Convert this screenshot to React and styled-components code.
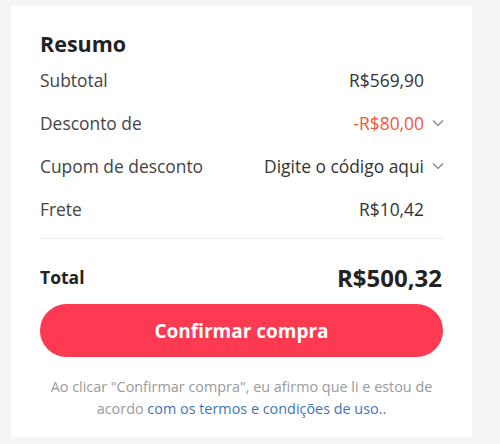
import React from "react";
import styled, { createGlobalStyle } from "styled-components";

const GlobalStyle = createGlobalStyle`
  body {
    margin: 0;
    background: #f5f5f5;
    font-family: "Open Sans", "Liberation Sans", sans-serif;
  }
`;

const Card = styled.div`
  width: 461px;
  margin: 6px 0 0 11px;
  background: #fff;
  box-sizing: border-box;
  padding: 24px 29px 17px 29px;
`;

const Title = styled.h2`
  margin: 0;
  font-size: 21.5px;
  line-height: 28px;
  font-weight: 700;
  color: #222;
`;

const Row = styled.div`
  display: flex;
  align-items: center;
  justify-content: space-between;
  height: 43px;
  font-size: 17.4px;
  color: #444;
`;

const Value = styled.div`
  display: flex;
  align-items: center;
  color: ${(p) => (p.red ? "#f0573a" : "#333")};
  padding-right: ${(p) => (p.chevron ? "0" : "19px")};
`;

const Chevron = styled.svg`
  width: 12px;
  height: 8px;
  margin-left: 8px;
  margin-right: -1px;
`;

const Divider = styled.hr`
  border: none;
  border-top: 1px solid #ececec;
  margin: 8px 0 0 0;
`;

const TotalRow = styled.div`
  display: flex;
  align-items: center;
  justify-content: space-between;
  height: 30px;
  margin-top: 23px;
  color: #222;
`;

const TotalLabel = styled.span`
  font-size: 17.5px;
  font-weight: 700;
`;

const TotalValue = styled.span`
  font-size: 24px;
  font-weight: 700;
  margin-right: 1px;
`;

const ConfirmButton = styled.button`
  display: block;
  width: 100%;
  height: 53px;
  margin-top: 12px;
  border: none;
  border-radius: 27px;
  background: #fe3a53;
  color: #fff;
  font-family: inherit;
  font-size: 19px;
  font-weight: 700;
  cursor: pointer;
`;

const Terms = styled.div`
  margin-top: 19px;
  text-align: center;
  font-size: 14.4px;
  line-height: 22px;
  color: #9a9a9a;
`;

const TermsLine = styled.div`
  white-space: nowrap;
`;

const TermsLink = styled.a`
  color: #3f74b5;
  text-decoration: none;
`;

const Down = () => (
  <Chevron viewBox="0 0 12 8">
    <path d="M1 1.5 L6 6.5 L11 1.5" fill="none" stroke="#808080" strokeWidth="1.2" />
  </Chevron>
);

const App = () => {
  return (
    <React.Fragment>
      <GlobalStyle />
      <Card>
        <Title>Resumo</Title>
        <Row>
          <span>Subtotal</span>
          <Value>R$569,90</Value>
        </Row>
        <Row>
          <span>Desconto de</span>
          <Value red chevron>
            -R$80,00
            <Down />
          </Value>
        </Row>
        <Row>
          <span>Cupom de desconto</span>
          <Value chevron>
            Digite o código aqui
            <Down />
          </Value>
        </Row>
        <Row>
          <span>Frete</span>
          <Value>R$10,42</Value>
        </Row>
        <Divider />
        <TotalRow>
          <TotalLabel>Total</TotalLabel>
          <TotalValue>R$500,32</TotalValue>
        </TotalRow>
        <ConfirmButton>Confirmar compra</ConfirmButton>
        <Terms>
          <TermsLine>Ao clicar "Confirmar compra", eu afirmo que li e estou de</TermsLine>
          <TermsLine>
            acordo <TermsLink href="#">com os termos e condições de uso..</TermsLink>
          </TermsLine>
        </Terms>
      </Card>
    </React.Fragment>
  );
};

export default App;
